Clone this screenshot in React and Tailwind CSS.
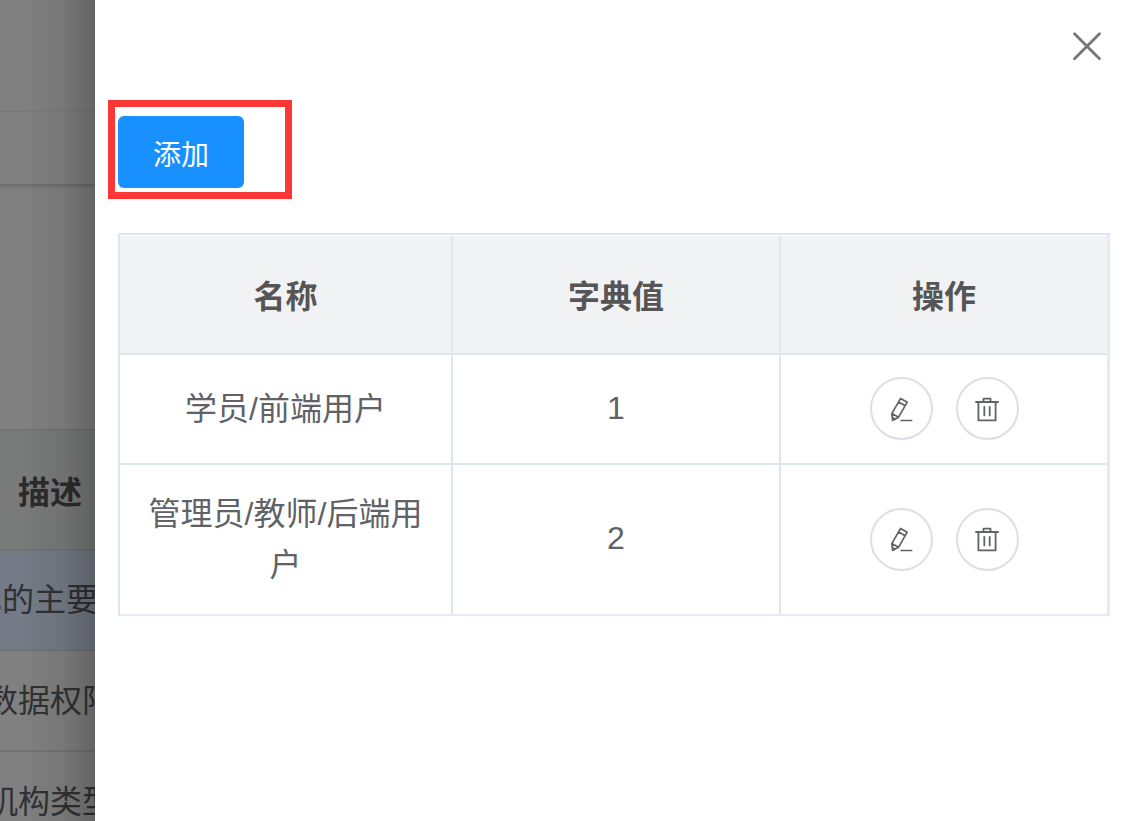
const rows = [
  { name: '学员/前端用户', value: 1, height: 'h-[110px] border-b-2' },
  { name: '管理员/教师/后端用户', value: 2, height: 'h-[149px]' },
]

export default function App() {
  return (
    <div className="flex h-[821px] w-[1132px] overflow-hidden bg-white font-['Liberation_Sans','Noto_Sans_CJK_SC',sans-serif] text-[32px] text-[#606266]">
      <PageBehind />
      <Drawer />
    </div>
  )
}

function PageBehind() {
  return (
    <div className="relative w-[95px] shrink-0 overflow-hidden whitespace-nowrap bg-[#808080] text-[#303133]">
      <div className="h-[112px] border-b-2 border-[#7b7b7b]" />
      <div className="h-[74px] border-b-2 border-[#6c6d72] bg-[#808080]" />
      <div className="h-[5px] bg-linear-to-b from-[#777777] to-[#808080]" />
      <div className="h-[240px] border-b-2 border-[#70757a]" />
      <div className="flex h-[120px] items-center border-b-2 border-[#707274] bg-[#797b7a] pl-[18px] pt-[6px] font-bold text-[#2b2b2b]">描述</div>
      <BackRow className="h-[100px] bg-[#747b86] -indent-[30px]">己的主要</BackRow>
      <BackRow className="h-[101px] -indent-[14px]">数据权限</BackRow>
      <BackRow className="h-[102px] -indent-[14px]">机构类型</BackRow>
      <div className="absolute inset-0 bg-linear-to-r from-transparent from-25% via-black/7 via-65% to-black/22" />
    </div>
  )
}

function BackRow({ className, children }) {
  return <div className={`flex items-center border-b-2 border-[#707479] ${className}`}>{children}</div>
}

function Drawer() {
  return (
    <main className="flex min-w-0 flex-1 flex-col pl-[13px]">
      <div className="flex h-[100px] justify-end pr-[30px] pt-[31px]">
        <button className="size-[30px]" aria-label="关闭">
          <svg viewBox="0 0 30 30" className="size-[30px]" fill="none" stroke="#73767c" strokeWidth="2.8" strokeLinecap="round">
            <path d="M2.5 2.7 27.5 27.7M27.5 2.7 2.5 27.7" />
          </svg>
        </button>
      </div>
      <div className="h-[99px] w-[184px] border-[7px] border-[#fc3736] pl-[3px] pt-[9px]">
        <button className="flex h-[72px] w-[126px] items-center justify-center rounded-[6px] bg-[#1890ff] pt-[8px] text-[28px] leading-none text-white">添加</button>
      </div>
      <DictTable />
    </main>
  )
}

function DictTable() {
  return (
    <div className="ml-[10px] mt-[34px] w-[992px] border-t-2 border-[#dfe6ec]">
      <div className="border-b-2 border-l-2 border-r-[3px] border-b-[#e6eaf5] border-l-[#dfe6ec] border-r-[#e6eaf5] pt-px">
        <div className="grid h-[119px] grid-cols-[333px_328px_326px] border-b-2 border-[#dfe6ec] bg-[#f1f2f4] font-bold text-[#555555]">
          <Cell divider className="pt-[5px]">名称</Cell>
          <Cell divider className="pt-[5px]">字典值</Cell>
          <Cell className="pt-[5px]">操作</Cell>
        </div>
        {rows.map((row) => (
          <div key={row.value} className={`grid grid-cols-[333px_328px_326px] border-[#dfe6ec] ${row.height}`}>
            <Cell divider>{row.name}</Cell>
            <Cell divider className="pb-[2px]">{row.value}</Cell>
            <div className="flex items-center justify-center gap-[23px] pb-px">
              <RoundButton label="编辑"><EditIcon /></RoundButton>
              <RoundButton label="删除"><TrashIcon /></RoundButton>
            </div>
          </div>
        ))}
      </div>
    </div>
  )
}

function Cell({ divider, className = '', children }) {
  return (
    <div className={`flex items-center justify-center px-[20px] text-center leading-[51px] ${divider ? 'border-r-2 border-[#dfe6ec]' : ''} ${className}`}>
      {children}
    </div>
  )
}

function RoundButton({ label, children }) {
  return (
    <button aria-label={label} className="flex size-[63px] items-center justify-center rounded-full border-2 border-[#dcdfe6]">
      {children}
    </button>
  )
}

function EditIcon() {
  return (
    <svg viewBox="0 0 28 28" className="size-7" fill="none" stroke="#606266" strokeWidth="1.7" strokeLinejoin="round" strokeLinecap="round">
      <path d="M13.6 3.4 20.2 7.2 11.6 22.2 5.6 25.4 4.8 18.6ZM11.6 6.9 18.2 10.7M4.8 18.6 11.6 22.2M5.6 25.4 8.2 24 5.3 22.6" />
      <path d="M14.2 25.5h10.4" />
    </svg>
  )
}

function TrashIcon() {
  return (
    <svg viewBox="0 0 28 28" className="size-7" fill="none" stroke="#606266" strokeWidth="1.8" strokeLinejoin="round" strokeLinecap="round">
      <path d="M3 7h22M10.5 6.7V3.6h7v3.1M5.4 7v18.4h17.2V7M11.3 11.8v8.6M16.7 11.8v8.6" />
    </svg>
  )
}
